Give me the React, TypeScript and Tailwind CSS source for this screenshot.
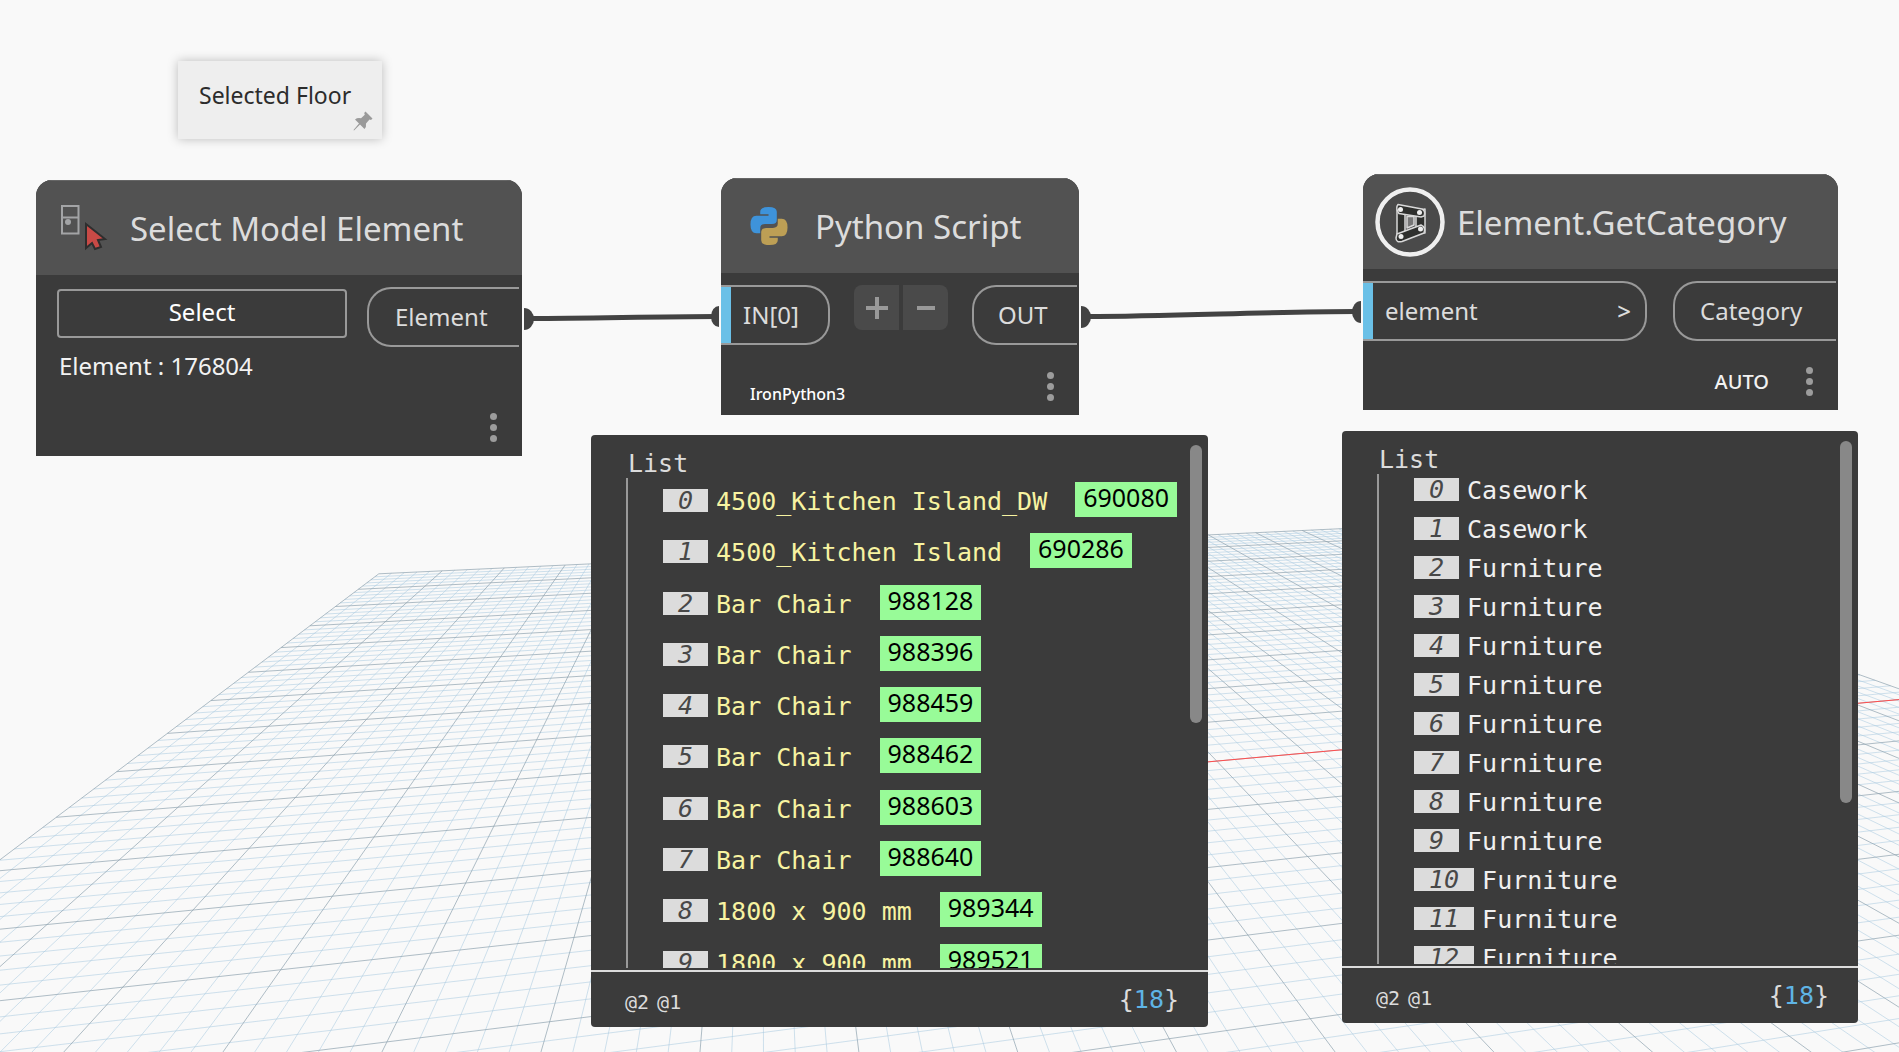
import type { ReactNode } from "react";

const SANS = "font-['Noto_Sans','Open_Sans',sans-serif]";
const MONO = "font-['DejaVu_Sans_Mono','Liberation_Mono',monospace]";

/* ---------- perspective ground grid ---------- */

const CELLS = 20;
const STEPS = 5;

function project(u: number, v: number): [number, number] {
  const w = 1 + 0.010547 * u - 0.050744 * v;
  return [
    (68.05 * u - 38.69 * v + 378.8) / w,
    (3.051 * u - 14.42 * v + 573.8) / w,
  ];
}

function segment(u1: number, v1: number, u2: number, v2: number) {
  const [x1, y1] = project(u1, v1);
  const [x2, y2] = project(u2, v2);
  return `M${x1.toFixed(1)} ${y1.toFixed(1)}L${x2.toFixed(1)} ${y2.toFixed(1)}`;
}

const NEAR = 18;
const minor: string[] = [];
const major: string[] = [];
for (let i = 0; i <= CELLS * STEPS; i++) {
  (i % STEPS === 0 ? major : minor).push(segment(i / STEPS, 0, i / STEPS, NEAR));
}
for (let i = 0; i <= NEAR * STEPS; i++) {
  (i % STEPS === 0 ? major : minor).push(segment(0, i / STEPS, CELLS, i / STEPS));
}

function GroundGrid() {
  return (
    <svg className="absolute inset-0 h-full w-full" fill="none" aria-hidden="true">
      <path d={minor.join("")} stroke="#a9cbe0" strokeOpacity="0.55" />
      <path d={major.join("")} stroke="#8ea3af" strokeOpacity="0.7" />
      <path d={segment(10, 10, 20, 10)} stroke="#ff4d4d" />
    </svg>
  );
}

function Wires() {
  return (
    <svg className="absolute inset-0 h-full w-full" fill="none" aria-hidden="true">
      <path d="M530 318.5C590 318.5 655 316.5 716 316.5" stroke="#434343" strokeWidth="5" />
      <path d="M1086 316.5C1175 316.5 1265 311.5 1356 311.5" stroke="#434343" strokeWidth="5" />
      <g fill="#434343">
        <path d="M524 308a10 11 0 0 1 0 22z" />
        <path d="M719 306a8 10.500 0 0 0 0 21z" />
        <path d="M1081 306a10 11 0 0 1 0 22z" />
        <path d="M1361 301a9 11 0 0 0 0 22z" />
      </g>
    </svg>
  );
}

/* ---------- icons ---------- */

function PinIcon() {
  return (
    <svg className="h-5 w-5" viewBox="0 0 20 20" fill="#9a9a9a" aria-hidden="true">
      <path d="M12.500.5L19.500 7.500L18 9L16.500 8.600L13 12.500Q13.500 16 11.500 18L7 13.500L1 19.500L.5 19L6 12.500L2 8.500Q4.500 6.500 8 7.300L11.800 3.800L11.200 2Z" />
    </svg>
  );
}

function SelectElementIcon() {
  return (
    <svg className="h-12 w-12" viewBox="0 0 48 48" fill="none" aria-hidden="true">
      <path d="M2 2H18.500V29.500H2ZM2 13.500H18.500" stroke="#a3a4a6" strokeWidth="2" />
      <circle cx="8" cy="18" r="3" fill="#a3a4a6" />
      <path d="M26 20L45 35L38 36L41 43L35 45L32 39L26 44Z" fill="#c94a46" stroke="#2e2e2e" strokeWidth="2" />
    </svg>
  );
}

function PythonIcon() {
  const snake =
    "M10 5Q10 0 18.500 0Q27 0 27 5V13Q27 17.500 22 17.500H15Q10 17.500 10 22V27H6Q0 27 0 18Q0 9 6 9H18.500V7.500H10Z";
  return (
    <svg className="h-10 w-10" viewBox="-1 -1 40 41" aria-hidden="true">
      <path d={snake} fill="#3e93da" />
      <path d={snake} fill="#bd9f55" transform="rotate(180 19 19.500)" />
    </svg>
  );
}

function DynamoIcon() {
  return (
    <svg className="h-[70px] w-[70px]" viewBox="0 0 70 70" fill="none" aria-hidden="true">
      <circle cx="35" cy="35" r="32.500" fill="#4a4a4a" stroke="#efefef" strokeWidth="4.500" />
      <g fill="#2f302e" stroke="#d8d8d8" strokeWidth="1.500" strokeLinejoin="round">
        <path d="M22 22L30 24V44L22 52Z" />
        <path d="M41 24L50 22V46L41 44Z" />
        <path d="M23 17.500L47 22Q51 24 49 29L46 30L24 26.500Q20 21 23 17.500Z" />
        <path d="M22 47L46 38Q51 40 49 46L27 54.500Q21 56 21 51Z" />
        <path d="M32 29.500H39V38L32 41Z" fill="#767676" />
      </g>
      <g fill="#efefef">
        <circle cx="25.500" cy="22.500" r="2.500" />
        <circle cx="44.500" cy="25.500" r="2.500" />
        <circle cx="45.500" cy="42" r="2.500" />
        <circle cx="26" cy="49.500" r="2.500" />
      </g>
    </svg>
  );
}

function MenuDots() {
  return (
    <button type="button" aria-label="Node options" className="flex w-4 flex-col items-center gap-1">
      <span className="h-[7px] w-[7px] rounded-full bg-[#9c9c9c]" />
      <span className="h-[7px] w-[7px] rounded-full bg-[#9c9c9c]" />
      <span className="h-[7px] w-[7px] rounded-full bg-[#9c9c9c]" />
    </button>
  );
}

/* ---------- nodes ---------- */

function Node({ place, header, children }: { place: string; header: ReactNode; children: ReactNode }) {
  return (
    <article className={`absolute flex flex-col overflow-hidden rounded-t-2xl bg-[#3b3b3b] text-[#dcdcdc] ${place}`}>
      <header className="flex h-[95px] shrink-0 items-center border-t border-[#666] bg-[#525252]">{header}</header>
      {children}
    </article>
  );
}

function Title({ children }: { children: ReactNode }) {
  return <h2 className="pt-[2px] text-[33px] leading-10 whitespace-nowrap">{children}</h2>;
}

function InPort({ children, className }: { children: ReactNode; className: string }) {
  return (
    <div className={`flex h-[60px] items-stretch rounded-r-[24px] border-2 border-l-0 border-[#999] text-2xl ${className}`}>
      <span className="w-[10px] bg-[#6ac0e7]" />
      <span className="flex flex-1 items-center justify-between pr-[14px] pl-3">{children}</span>
    </div>
  );
}

function OutPort({ children, className }: { children: ReactNode; className: string }) {
  return (
    <div className={`flex h-[60px] items-center rounded-l-[24px] border-2 border-r-0 border-[#999] text-2xl ${className}`}>
      {children}
    </div>
  );
}

/* ---------- preview panels ---------- */

function Preview({ place, thumb, children }: { place: string; thumb: string; children: ReactNode }) {
  return (
    <section className={`absolute flex h-[592px] flex-col overflow-hidden rounded bg-[#3b3b3b] text-[25px] text-[#dcdcdc] ${MONO} ${place}`}>
      <div className="flex min-h-0 flex-1 pb-[2px] pl-[35px]">
        <div className="flex min-w-0 flex-1 flex-col pt-[15px]">
          <h3 className="h-7 pl-[2px] leading-7">List</h3>
          <div className="min-h-0 flex-1 overflow-hidden border-l-2 border-[#999] pl-[35px]">{children}</div>
        </div>
        <div className="w-[18px] shrink-0 pt-[10px]">
          <div className={`w-3 rounded-full bg-[#888] ${thumb}`} />
        </div>
      </div>
      <footer className="flex h-[57px] shrink-0 items-center justify-between border-t-2 border-[#dcdcdc] pr-[29px] pl-[34px]">
        <span className="flex gap-2 pt-1 text-xl">
          <span>@2</span>
          <span>@1</span>
        </span>
        <span>
          {"{"}
          <span className="text-[#5fb4e5]">18</span>
          {"}"}
        </span>
      </footer>
    </section>
  );
}

function IndexChip({ value }: { value: number }) {
  return (
    <span className="h-[23px] shrink-0 bg-[#dcdcdc] px-[15px] leading-[23px] text-[#484848] italic">{value}</span>
  );
}

const scriptItems: [string, string][] = [
  ["4500_Kitchen Island_DW", "690080"],
  ["4500_Kitchen Island", "690286"],
  ["Bar Chair", "988128"],
  ["Bar Chair", "988396"],
  ["Bar Chair", "988459"],
  ["Bar Chair", "988462"],
  ["Bar Chair", "988603"],
  ["Bar Chair", "988640"],
  ["1800 x 900 mm", "989344"],
  ["1800 x 900 mm", "989521"],
];

const categories = ["Casework", "Casework", ...Array.from({ length: 11 }, () => "Furniture")];

export default function App() {
  return (
    <main className={`relative min-h-screen w-full overflow-hidden bg-[#f9f9f9] ${SANS}`}>
      <GroundGrid />
      <Wires />

      <aside className="absolute top-[61px] left-[178px] flex h-[78px] w-[204px] flex-col bg-[#eee] px-[21px] pt-[18px] shadow-[0_0_10px_rgba(0,0,0,0.25)]">
        <p className="text-[23px] leading-8 whitespace-nowrap text-[#2c2c2c]">Selected Floor</p>
        <span className="-mr-3 self-end">
          <PinIcon />
        </span>
      </aside>

      <Node
        place="top-[180px] left-[36px] h-[276px] w-[486px]"
        header={
          <>
            <span className="ml-6 mr-[22px]">
              <SelectElementIcon />
            </span>
            <Title>Select Model Element</Title>
          </>
        }
      >
        <div className="flex gap-5 pt-3 pr-[3px] pl-[21px]">
          <div className="w-[290px] pt-[2px]">
            <button type="button" className="h-[49px] w-full rounded-sm border-2 border-[#999] pb-[3px] text-2xl text-white">
              Select
            </button>
            <p className="pt-3 pl-[2px] text-2xl leading-8 text-[#f2f2f2]">Element : 176804</p>
          </div>
          <OutPort className="flex-1 pl-[26px]">Element</OutPort>
        </div>
        <div className="mt-auto mr-[21px] mb-[14px] self-end">
          <MenuDots />
        </div>
      </Node>

      <Node
        place="top-[178px] left-[721px] h-[237px] w-[358px]"
        header={
          <>
            <span className="ml-7 mr-[26px]">
              <PythonIcon />
            </span>
            <Title>Python Script</Title>
          </>
        }
      >
        <div className="flex items-start justify-between pt-3 pr-[2px]">
          <InPort className="w-[109px]">IN[0]</InPort>
          <div className="flex gap-1">
            <button type="button" aria-label="Add input" className="flex h-[45px] w-[45px] items-center justify-center rounded-l-lg bg-[#4a4a4a]">
              <svg className="h-6 w-6" viewBox="0 0 24 24" stroke="#999" strokeWidth="4" aria-hidden="true">
                <path d="M1 12H23M12 1V23" />
              </svg>
            </button>
            <button type="button" aria-label="Remove input" className="flex h-[45px] w-[45px] items-center justify-center rounded-r-lg bg-[#4a4a4a]">
              <svg className="h-6 w-6" viewBox="0 0 24 24" stroke="#999" strokeWidth="4" aria-hidden="true">
                <path d="M3 12H21" />
              </svg>
            </button>
          </div>
          <OutPort className="w-[105px] pl-6">OUT</OutPort>
        </div>
        <div className="mt-auto mr-[21px] mb-[14px] ml-[29px] flex items-end justify-between">
          <span className="text-base leading-[14px] font-medium text-white">IronPython3</span>
          <MenuDots />
        </div>
      </Node>

      <Node
        place="top-[174px] left-[1363px] h-[236px] w-[475px]"
        header={
          <>
            <span className="ml-3 mr-3">
              <DynamoIcon />
            </span>
            <Title>Element.GetCategory</Title>
          </>
        }
      >
        <div className="flex justify-between pt-3 pr-[2px]">
          <InPort className="w-[284px]">
            <span>element</span>
            <span className="font-medium">&gt;</span>
          </InPort>
          <OutPort className="w-[163px] pl-[25px]">Category</OutPort>
        </div>
        <div className="mt-auto mr-[21px] mb-[14px] flex items-center justify-end gap-8">
          <span className="text-xl leading-6 font-medium text-[#f2f2f2]">AUTO</span>
          <MenuDots />
        </div>
      </Node>

      <Preview place="top-[435px] left-[591px] w-[617px]" thumb="h-[278px]">
        <ol className="flex h-[513px] flex-col">
          {scriptItems.map(([name, id], i) => (
            <li key={id} className="flex flex-1 items-start pt-1 whitespace-nowrap">
              <span className="flex items-start gap-2 pt-[7px]">
                <IndexChip value={i} />
                <span className="leading-[25px] text-[#f7f3a1]">{name}</span>
              </span>
              <span className={`ml-7 h-[35px] bg-[#98fb98] px-2 text-[25px] leading-[31px] text-black ${SANS}`}>{id}</span>
            </li>
          ))}
        </ol>
      </Preview>

      <Preview place="top-[431px] left-[1342px] w-[516px]" thumb="h-[362px]">
        <ol>
          {categories.map((name, i) => (
            <li key={i} className="flex h-[39px] items-start gap-2 pt-1">
              <IndexChip value={i} />
              <span className="leading-[25px] text-[#f0f0f0]">{name}</span>
            </li>
          ))}
        </ol>
      </Preview>
    </main>
  );
}
